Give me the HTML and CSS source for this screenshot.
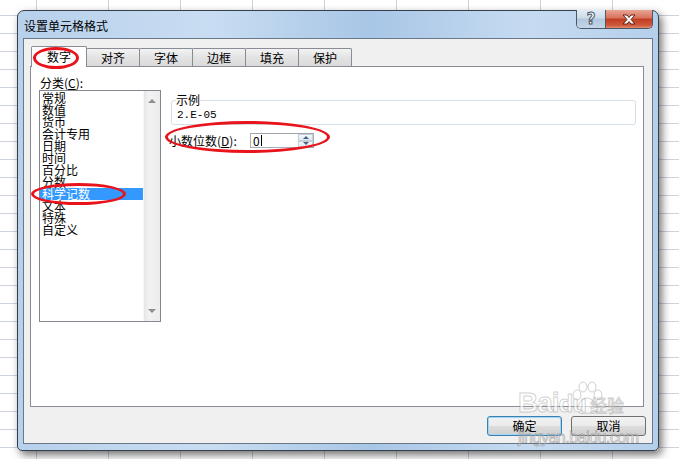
FILE: index.html
```html
<!DOCTYPE html>
<html lang="zh-CN">
<head>
    <meta charset="UTF-8">
    <title>设置单元格格式</title>
    <link rel="stylesheet" href="styles.css">
</head>
<body>
    <div class="dialog">
        <div class="titlebar">
            <span class="title">设置单元格格式</span>
            <div class="caption-btns">
                <span class="btn-help">?</span>
                <span class="btn-close">
                    <svg width="16" height="11" viewBox="0 0 16 11">
                        <path d="M2 1 H6 L8 3.5 L10 1 H14 L10 5.5 L14 10 H10 L8 7.5 L6 10 H2 L6 5.5 Z" fill="#fff" stroke="#5a2418" stroke-width="1" stroke-linejoin="round"/>
                    </svg>
                </span>
            </div>
        </div>

        <div class="client">
            <div class="tabs">
                <div class="tab active">数字</div>
                <div class="tab">对齐</div>
                <div class="tab">字体</div>
                <div class="tab">边框</div>
                <div class="tab">填充</div>
                <div class="tab">保护</div>
            </div>

            <div class="panel">
                <div class="col-left">
                    <div class="field-label">分类(<u>C</u>):</div>
                    <div class="listbox">
                        <ul class="list">
                            <li>常规</li>
                            <li>数值</li>
                            <li>货币</li>
                            <li>会计专用</li>
                            <li>日期</li>
                            <li>时间</li>
                            <li>百分比</li>
                            <li>分数</li>
                            <li class="selected">科学记数</li>
                            <li>文本</li>
                            <li>特殊</li>
                            <li>自定义</li>
                        </ul>
                        <div class="scrollbar">
                            <span class="arrow-up"></span>
                            <span class="arrow-down"></span>
                        </div>
                    </div>
                </div>

                <div class="col-right">
                    <fieldset class="sample">
                        <legend>示例</legend>
                        <div class="sample-value">2.E-05</div>
                    </fieldset>
                    <div class="decimals">
                        <span class="decimals-label">小数位数(<u>D</u>):</span>
                        <div class="spin-input">
                            <span class="spin-text">0<i class="caret"></i></span>
                            <div class="spin-btns">
                                <span class="spin-up"></span>
                                <span class="spin-down"></span>
                            </div>
                        </div>
                    </div>
                </div>
            </div>

            <div class="footer">
                <button class="btn default">确定</button>
                <button class="btn">取消</button>
            </div>
        </div>

        <!-- red annotation marks -->
        <span class="mark mark-tab"></span>
        <span class="mark mark-list"></span>
        <span class="mark mark-decimals"></span>

        <div class="watermark">
            <svg class="wm-paw" width="34" height="36" viewBox="0 0 34 36">
                <g fill="rgba(255,255,255,0.6)" stroke="rgba(120,120,120,0.35)" stroke-width="1">
                    <ellipse cx="7" cy="14" rx="4" ry="5"/>
                    <ellipse cx="13" cy="6" rx="4" ry="5"/>
                    <ellipse cx="22" cy="6" rx="4" ry="5"/>
                    <ellipse cx="28" cy="14" rx="4" ry="5"/>
                    <path d="M17 17 C11 17 6 26 8 30 C10 34 14 32 17 32 C20 32 25 34 27 30 C29 26 23 17 17 17 Z"/>
                </g>
            </svg>
            <span class="wm-logo">Bai<b>du</b></span><span class="wm-cn">经验</span>
            <span class="wm-url">jingyan.baidu.com</span>
        </div>
    </div>
</body>
</html>
```

FILE: styles.css
```css
body {
    margin: 0;
    width: 679px;
    height: 459px;
    overflow: hidden;
    font-family: "Noto Sans CJK SC", "Liberation Sans", sans-serif;
    font-size: 12px;
    color: #000;
    background-color: #fff;
    background-image:
        linear-gradient(to bottom, #cdd3dc 1px, transparent 1px),
        linear-gradient(to right, #cdd3dc 1px, transparent 1px);
    background-size: 100% 18px, 72px 100%;
    background-position: 0 15px, 36px 0;
}
.dialog {
    position: relative;
    box-sizing: border-box;
    width: 642px;
    height: 441px;
    margin: 10px 0 0 17px;
    padding: 0 5px 6px 5px;
    border: 1px solid #36404c;
    border-radius: 7px 7px 5px 5px;
    background: linear-gradient(to right, #b7d0eb 0%, #c9ddf2 30%, #a8c6e6 55%, #c6dbf1 80%, #b5cfeb 100%);
    box-shadow: 3px 4px 9px rgba(0, 0, 0, 0.55);
    display: flex;
    flex-direction: column;
}
.titlebar {
    height: 27px;
    display: flex;
    justify-content: space-between;
    align-items: flex-start;
}
.title {
    align-self: center;
    padding: 2px 0 0 1px;
    font-size: 12px;
    line-height: 14px;
    color: #000;
}
.caption-btns {
    display: flex;
    height: 18px;
    margin-top: -1px;
    border: 1px solid #4a5868;
    border-top: none;
    border-radius: 0 0 5px 5px;
    overflow: hidden;
}
.btn-help {
    width: 28px;
    border-right: 1px solid #4a5868;
    background: linear-gradient(to bottom, #e3ecf5 0%, #ccdbea 45%, #b2c7dc 50%, #c4d6e8 100%);
    text-align: center;
    font-family: "DejaVu Sans", sans-serif;
    font-weight: bold;
    font-size: 15px;
    line-height: 18px;
    color: #fff;
    -webkit-text-stroke: 1px #4a5868;
}
.btn-close {
    width: 46px;
    display: flex;
    align-items: center;
    justify-content: center;
    background: linear-gradient(to bottom, #e9a596 0%, #d8705a 45%, #c13d22 50%, #d0583c 85%, #e28d6e 100%);
}
.client {
    flex: 1;
    border: 1px solid #6b7888;
    background: #f0f0f0;
    padding: 7px 6px 0 6px;
    display: flex;
    flex-direction: column;
}
.tabs {
    display: flex;
    align-items: flex-end;
    padding-left: 1px;
    position: relative;
    z-index: 1;
}
.tab {
    box-sizing: border-box;
    width: 54px;
    height: 18px;
    margin-left: -1px;
    border: 1px solid #898c95;
    border-bottom: none;
    border-radius: 2px 2px 0 0;
    background: linear-gradient(to bottom, #f3f3f3, #e3e3e3 50%, #dadada);
    text-align: center;
    line-height: 17px;
}
.tab:first-child {
    margin-left: 0;
}
.tab.active {
    width: 56px;
    height: 21px;
    margin-bottom: -1px;
    background: #fff;
    line-height: 20px;
}
.panel {
    box-sizing: border-box;
    height: 341px;
    margin-right: 2px;
    border: 1px solid #898c95;
    background: #fff;
    padding: 8px 7px 0 8px;
    display: flex;
}
.col-left {
    width: 122px;
}
.field-label {
    line-height: 15px;
    padding-left: 1px;
}
.listbox {
    box-sizing: border-box;
    height: 232px;
    border: 1px solid #828790;
    display: flex;
}
.list {
    flex: 1;
    margin: 0;
    padding: 1px 0 0 0;
    list-style: none;
}
.list li {
    height: 12px;
    line-height: 12px;
    padding-left: 2px;
    white-space: nowrap;
}
.list li.selected {
    background: #3399ff;
    color: #fff;
}
.scrollbar {
    width: 17px;
    background: linear-gradient(to right, #e6e6e6, #f2f2f2 30%, #ececec);
    border-left: 1px solid #f7f7f7;
    display: flex;
    flex-direction: column;
    justify-content: space-between;
    align-items: center;
    padding: 8px 0 8px;
    box-sizing: border-box;
}
.arrow-up,
.arrow-down {
    width: 0;
    height: 0;
    border-left: 4px solid transparent;
    border-right: 4px solid transparent;
}
.arrow-up {
    border-bottom: 4px solid #8a8f96;
}
.arrow-down {
    border-top: 4px solid #8a8f96;
}
.col-right {
    flex: 1;
    margin-left: 8px;
    padding-top: 17px;
}
.sample {
    margin: 0 0 0 2px;
    padding: 0 4px 2px 4px;
    border: 1px solid #d5dfe5;
    border-radius: 3px;
}
.sample legend {
    padding: 0;
    line-height: 16px;
}
.sample-value {
    font-family: "Liberation Mono", monospace;
    font-size: 11px;
    line-height: 14px;
    padding-left: 1px;
}
.decimals {
    display: flex;
    align-items: center;
    margin-top: 8px;
}
.decimals-label {
    width: 81px;
    line-height: 15px;
}
.spin-input {
    box-sizing: border-box;
    width: 64px;
    height: 15px;
    border: 1px solid #abadb3;
    border-top-color: #9ea2aa;
    background: #fff;
    display: flex;
    justify-content: space-between;
}
.spin-text {
    padding-left: 2px;
    line-height: 13px;
    display: flex;
    align-items: center;
}
.caret {
    display: inline-block;
    width: 1px;
    height: 11px;
    background: #000;
    margin-left: 1px;
}
.spin-btns {
    width: 15px;
    display: flex;
    flex-direction: column;
}
.spin-up,
.spin-down {
    flex: 1;
    display: flex;
    align-items: center;
    justify-content: center;
    border: 1px solid #c4cfdc;
    background: linear-gradient(to bottom, #f5f8fb, #dfe8f2);
}
.spin-up::after,
.spin-down::after {
    content: "";
    border-left: 3px solid transparent;
    border-right: 3px solid transparent;
}
.spin-up::after {
    border-bottom: 3px solid #4d6185;
}
.spin-down::after {
    border-top: 3px solid #4d6185;
}
.footer {
    display: flex;
    justify-content: flex-end;
    gap: 9px;
    padding-top: 9px;
}
.btn {
    box-sizing: border-box;
    width: 75px;
    height: 20px;
    padding: 0;
    border: 1px solid #707070;
    border-radius: 3px;
    background: linear-gradient(to bottom, #f2f2f2 0%, #ebebeb 48%, #dddddd 52%, #cfcfcf 100%);
    font-family: "Noto Sans CJK SC", sans-serif;
    font-size: 12px;
    line-height: 18px;
    color: #000;
}
.btn.default {
    border-color: #3c7fb1;
    box-shadow: inset 0 0 0 1px #9fd5f5;
}
.mark {
    position: absolute;
    border: 3px solid #e8131b;
    border-radius: 50%;
    box-sizing: border-box;
    z-index: 3;
}
.mark-tab {
    left: 15px;
    top: 36px;
    width: 46px;
    height: 22px;
}
.mark-list {
    left: 13px;
    top: 172px;
    width: 95px;
    height: 22px;
}
.mark-decimals {
    left: 147px;
    top: 110px;
    width: 165px;
    height: 32px;
}
.watermark {
    position: absolute;
    left: 500px;
    top: 376px;
    width: 135px;
    z-index: 4;
    color: rgba(255, 255, 255, 0.6);
    -webkit-text-stroke: 1px rgba(120, 120, 120, 0.35);
    font-family: "Liberation Sans", sans-serif;
}
.wm-paw {
    position: absolute;
    left: 52px;
    top: -6px;
}
.wm-logo {
    position: relative;
    font-size: 28px;
    font-weight: bold;
    line-height: 32px;
    letter-spacing: -1px;
}
.wm-logo b {
    font-size: 24px;
}
.wm-cn {
    position: relative;
    font-family: "Noto Sans CJK SC", sans-serif;
    font-size: 17px;
    margin-left: 4px;
}
.wm-url {
    display: block;
    margin-top: 10px;
    font-size: 16px;
    line-height: 16px;
    letter-spacing: -0.5px;
    color: rgba(255, 255, 255, 0.5);
    -webkit-text-stroke: 0.8px rgba(100, 100, 100, 0.45);
}
```
